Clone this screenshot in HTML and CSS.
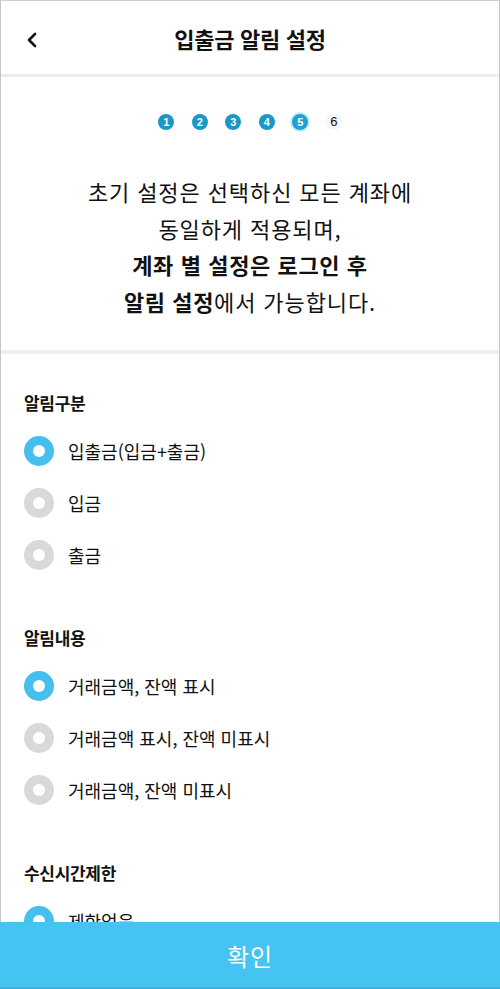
FILE: index.html
```html
<!DOCTYPE html>
<html lang="ko">
<head>
<meta charset="utf-8">
<title>입출금 알림 설정</title>
<link rel="stylesheet" href="styles.css">
</head>
<body>
<div class="page">
  <header class="header">
    <button class="back" aria-label="뒤로">
      <svg width="12" height="16" viewBox="0 0 12 16"><path d="M9 2 L3 8 L9 14" fill="none" stroke="#111" stroke-width="2.6" stroke-linecap="round" stroke-linejoin="round"/></svg>
    </button>
    <h1 class="title">입출금 알림 설정</h1>
  </header>

  <section class="intro">
    <ol class="steps">
      <li class="step done">1</li>
      <li class="step done">2</li>
      <li class="step done">3</li>
      <li class="step done">4</li>
      <li class="step current">5</li>
      <li class="step todo">6</li>
    </ol>
    <p class="desc">초기 설정은 선택하신 모든 계좌에<br>동일하게 적용되며,<br><b>계좌 별 설정은 로그인 후</b><br><b>알림 설정</b>에서 가능합니다.</p>
  </section>

  <section class="group">
    <h2 class="group-title">알림구분</h2>
    <ul class="options">
      <li class="option"><span class="radio on"></span>입출금(입금+출금)</li>
      <li class="option"><span class="radio"></span>입금</li>
      <li class="option"><span class="radio"></span>출금</li>
    </ul>
  </section>

  <section class="group">
    <h2 class="group-title">알림내용</h2>
    <ul class="options">
      <li class="option"><span class="radio on"></span>거래금액, 잔액 표시</li>
      <li class="option"><span class="radio"></span>거래금액 표시, 잔액 미표시</li>
      <li class="option"><span class="radio"></span>거래금액, 잔액 미표시</li>
    </ul>
  </section>

  <section class="group">
    <h2 class="group-title">수신시간제한</h2>
    <ul class="options">
      <li class="option"><span class="radio on"></span>제한없음</li>
      <li class="option"><span class="radio"></span>설정</li>
    </ul>
  </section>
</div>
<button class="confirm">확인</button>
</body>
</html>
```

FILE: styles.css
```css
* { box-sizing: border-box; }
html, body { margin: 0; padding: 0; }
body {
  font-family: "Noto Sans CJK KR", "Noto Sans", sans-serif;
  color: #111;
  background: #fff;
  overflow: hidden;
  height: 989px;
}
.page {
  border-left: 1px solid #c4c4c4;
  border-right: 1px solid #c4c4c4;
  border-top: 1px solid #d0d0d0;
  min-height: 989px;
}
.header {
  height: 76px;
  display: flex;
  align-items: center;
  justify-content: center;
  position: relative;
  border-bottom: 3px solid #ececec;
}
.back {
  position: absolute;
  left: 24px;
  top: 31px;
  border: 0;
  background: none;
  padding: 0;
  width: 14px;
  height: 16px;
}
.title {
  margin: 0;
  font-size: 22px;
  font-weight: 700;
  letter-spacing: -0.3px;
  line-height: 30px;
}
.intro {
  padding: 37px 0 31px;
  border-bottom: 4px solid #efefef;
  text-align: center;
}
.steps {
  list-style: none;
  margin: 0;
  padding: 0;
  display: flex;
  justify-content: center;
  gap: 17.5px;
}
.step {
  width: 16px;
  height: 16px;
  border-radius: 50%;
  font-size: 11px;
  font-weight: 700;
  line-height: 16px;
  text-align: center;
  font-family: "Liberation Sans", sans-serif;
}
.step.done { background: #1b97c8; color: #fff; }
.step.current { background: #1ea2d4; color: #fff; box-shadow: 0 0 0 2px #c6ecfa; }
.step.todo { background: #f6f6f6; color: #111; font-weight: 400; font-size: 13px; }
.desc {
  margin: 43px 0 0;
  font-size: 22px;
  line-height: 36.5px;
  letter-spacing: 0.9px;
}
.desc b { font-weight: 700; letter-spacing: 0.6px; }
.group {
  padding: 37px 23px 0;
}
.group + .group { padding-top: 45px; }
.group-title {
  margin: 0;
  font-size: 17px;
  line-height: 24px;
  font-weight: 700;
  letter-spacing: -0.3px;
}
.options {
  list-style: none;
  margin: 10px 0 0;
  padding: 0;
}
.option {
  height: 52px;
  display: flex;
  align-items: center;
  gap: 14px;
  font-size: 18px;
  letter-spacing: 0;
}
.radio {
  width: 30px;
  height: 30px;
  border-radius: 50%;
  background: #d9d9d9;
  display: flex;
  align-items: center;
  justify-content: center;
  flex: none;
}
.radio::after {
  content: "";
  width: 12px;
  height: 12px;
  border-radius: 50%;
  background: #fff;
}
.radio.on { background: #44bfee; }
.confirm {
  position: fixed;
  left: 0;
  right: 0;
  bottom: 0;
  height: 67px;
  border: 0;
  border-bottom: 2px solid #3db2de;
  padding-top: 3px;
  background: #46c4f1;
  color: #fff;
  font-family: "Noto Sans CJK KR", sans-serif;
  font-size: 24px;
  letter-spacing: 1px;
}
```
